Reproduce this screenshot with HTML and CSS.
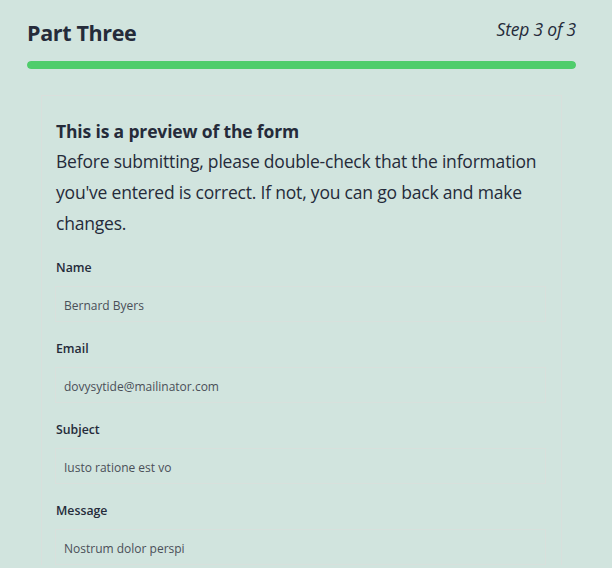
FILE: index.html
```html
<!DOCTYPE html>
<html lang="en">
<head>
<meta charset="utf-8">
<title>Part Three</title>
<link rel="stylesheet" href="styles.css">
</head>
<body>
<div class="page">
  <header class="head">
    <h1 class="title">Part Three</h1>
    <span class="step">Step 3 of 3</span>
  </header>
  <div class="progress"><div class="progress-fill" style="width:100%"></div></div>
  <section class="card">
    <h2 class="card-title">This is a preview of the form</h2>
    <p class="card-text">Before submitting, please double-check that the information you've entered is correct. If not, you can go back and make changes.</p>
    <div class="field">
      <label class="label">Name</label>
      <div class="value">Bernard Byers</div>
    </div>
    <div class="field">
      <label class="label">Email</label>
      <div class="value">dovysytide@mailinator.com</div>
    </div>
    <div class="field">
      <label class="label">Subject</label>
      <div class="value">Iusto ratione est vo</div>
    </div>
    <div class="field">
      <label class="label">Message</label>
      <div class="value">Nostrum dolor perspi</div>
    </div>
  </section>
</div>
</body>
</html>
```
FILE: styles.css
```css
* { box-sizing: border-box; }
html, body { margin: 0; padding: 0; }
body {
  background: #d1e4de;
  font-family: "Open Sans", "Noto Sans", sans-serif;
  color: #252b3a;
  overflow: hidden;
}
.page {
  padding: 16px 36px 0 27px;
}
.head {
  display: flex;
  justify-content: space-between;
  align-items: flex-start;
}
.title {
  margin: 0;
  padding-top: 2px;
  font-size: 21.5px;
  font-weight: 700;
  line-height: 30px;
  letter-spacing: -0.35px;
}
.step {
  font-style: italic;
  font-size: 17.5px;
  line-height: 26px;
  letter-spacing: -0.2px;
}
.progress {
  margin-top: 13px;
  height: 8px;
  border-radius: 4px;
  background: #c8d8d2;
  overflow: hidden;
}
.progress-fill {
  height: 100%;
  background: #4fcd6b;
  border-radius: 4px;
}
.card {
  margin: 26px 14px 0 14px;
  border: 1px solid #d9dfdc;
  border-bottom: none;
  padding: 23px 15px 0 14px;
}
.card-title {
  margin: 0;
  font-size: 17.5px;
  font-weight: 700;
  line-height: 24px;
  letter-spacing: -0.15px;
}
.card-text {
  margin: 3px 0 0;
  font-size: 17.5px;
  line-height: 31px;
  letter-spacing: -0.2px;
}
.field {
  margin-top: 20px;
}
.field + .field {
  margin-top: 18px;
}
.label {
  display: block;
  font-size: 12.3px;
  font-weight: 600;
  line-height: 18px;
  margin-bottom: 9px;
}
.value {
  height: 36px;
  margin-left: -1px;
  border: 1px solid #d8e0dc;
  padding: 3px 8px 0;
  font-size: 12px;
  line-height: 32px;
  color: #4a4f58;
}
```
